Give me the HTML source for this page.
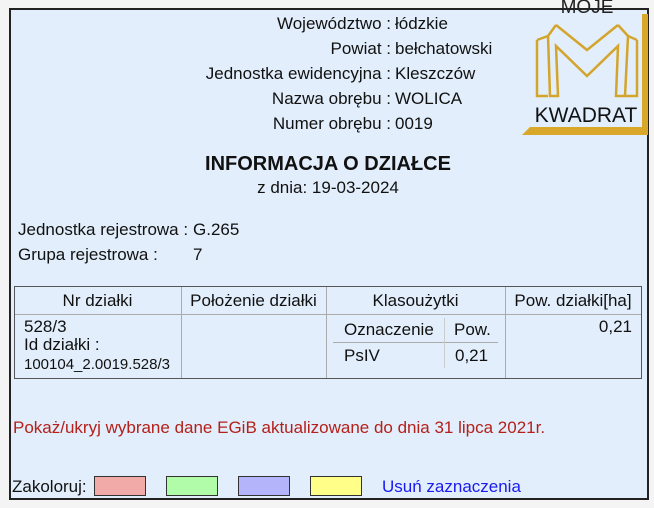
<!DOCTYPE html>
<html><head><meta charset="utf-8"><style>
body{margin:0;background:#f4f4f4;width:654px;height:508px;position:relative;overflow:hidden;font-family:"Liberation Sans",sans-serif;color:#111;}
.box{position:absolute;left:9px;top:8px;width:636px;height:488px;border:2px solid #222;background:#e2eefb;}
.t{position:absolute;font-size:17px;white-space:nowrap;}
.r{text-align:right;}
.ln{position:absolute;background:#aaa;}
.sw{position:absolute;top:476px;width:50px;height:18px;border:1px solid #333;}
</style></head><body>
<div class="box"></div>
<div class="t r" style="right:263px;top:14px">Województwo :</div><div class="t" style="left:395px;top:14px">łódzkie</div>
<div class="t r" style="right:263px;top:39px">Powiat :</div><div class="t" style="left:395px;top:39px">bełchatowski</div>
<div class="t r" style="right:263px;top:64px">Jednostka ewidencyjna :</div><div class="t" style="left:395px;top:64px">Kleszczów</div>
<div class="t r" style="right:263px;top:89px">Nazwa obrębu :</div><div class="t" style="left:395px;top:89px">WOLICA</div>
<div class="t r" style="right:263px;top:114px">Numer obrębu :</div><div class="t" style="left:395px;top:114px">0019</div>
<div class="t" style="left:0;width:656px;text-align:center;top:153px;font-weight:bold;font-size:20px">INFORMACJA O DZIAŁCE</div>
<div class="t" style="left:0;width:656px;text-align:center;top:178px">z dnia: 19-03-2024</div>
<div class="t" style="left:18px;top:220px">Jednostka rejestrowa :</div><div class="t" style="left:193px;top:220px">G.265</div>
<div class="t" style="left:18px;top:245px">Grupa rejestrowa :</div><div class="t" style="left:193px;top:245px">7</div>
<div style="position:absolute;left:14px;top:286px;width:626px;height:91px;border:1px solid #555;"></div>
<div class="ln" style="left:15px;top:314px;width:626px;height:1px"></div>
<div class="ln" style="left:181px;top:287px;width:1px;height:91px"></div>
<div class="ln" style="left:326px;top:287px;width:1px;height:91px"></div>
<div class="ln" style="left:505px;top:287px;width:1px;height:91px"></div>
<div class="ln" style="left:333px;top:342px;width:165px;height:1px"></div>
<div class="ln" style="left:444px;top:318px;width:1px;height:50px;background:#ccc"></div>
<div class="t" style="left:14px;width:167px;text-align:center;top:291px">Nr działki</div>
<div class="t" style="left:181px;width:145px;text-align:center;top:291px">Położenie działki</div>
<div class="t" style="left:326px;width:179px;text-align:center;top:291px">Klasoużytki</div>
<div class="t" style="left:505px;width:136px;text-align:center;top:291px">Pow. działki[ha]</div>
<div class="t" style="left:24px;top:317px">528/3</div>
<div class="t" style="left:24px;top:335px">Id działki :</div>
<div class="t" style="left:24px;top:356px;font-size:15px">100104_2.0019.528/3</div>
<div class="t" style="left:344px;top:320px">Oznaczenie</div>
<div class="t" style="left:454px;top:320px">Pow.</div>
<div class="t" style="left:344px;top:346px">PsIV</div>
<div class="t" style="left:455px;top:346px">0,21</div>
<div class="t r" style="right:22px;top:317px">0,21</div>
<div class="t" style="left:13px;top:418px;color:#b4201a">Pokaż/ukryj wybrane dane EGiB aktualizowane do dnia 31 lipca 2021r.</div>
<div class="t" style="left:12px;top:477px">Zakoloruj:</div>
<div class="sw" style="left:94px;background:#f2aaa8"></div>
<div class="sw" style="left:166px;background:#b0fca8"></div>
<div class="sw" style="left:238px;background:#b4b4fa"></div>
<div class="sw" style="left:310px;background:#fefe88"></div>
<div class="t" style="left:382px;top:477px;color:#1a1af0">Usuń zaznaczenia</div>
<div style="position:absolute;left:520px;top:10px;width:124px;height:120px;background:#e2eefb"></div>
<svg style="position:absolute;left:0;top:0" width="654" height="508">
<polygon points="522,135 530,127 647,127 647,135" fill="#d9a72a"/>
<rect x="642" y="14" width="6" height="121" fill="#d9a72a"/>
<g fill="none" stroke="#d4a52c" stroke-width="2.5" stroke-linejoin="miter">
<polyline points="537,40 548,36 550,96 558,96 556,46 587,76 618,46 616,96 625,96 628,36 637,40"/>
<polyline points="556,25 587,50 618,25"/>
<polyline points="556,25 548,36"/><polyline points="618,25 628,36"/>
<polyline points="537,40 537,96 548,96"/><polyline points="637,40 637,96 625,96"/>
</g>
<text x="587" y="13" text-anchor="middle" font-family="Liberation Sans" font-size="19" fill="#222">MOJE</text>
<text x="586" y="122" text-anchor="middle" font-family="Liberation Sans" font-size="21" fill="#111">KWADRAT</text>
</svg>
</body></html>
